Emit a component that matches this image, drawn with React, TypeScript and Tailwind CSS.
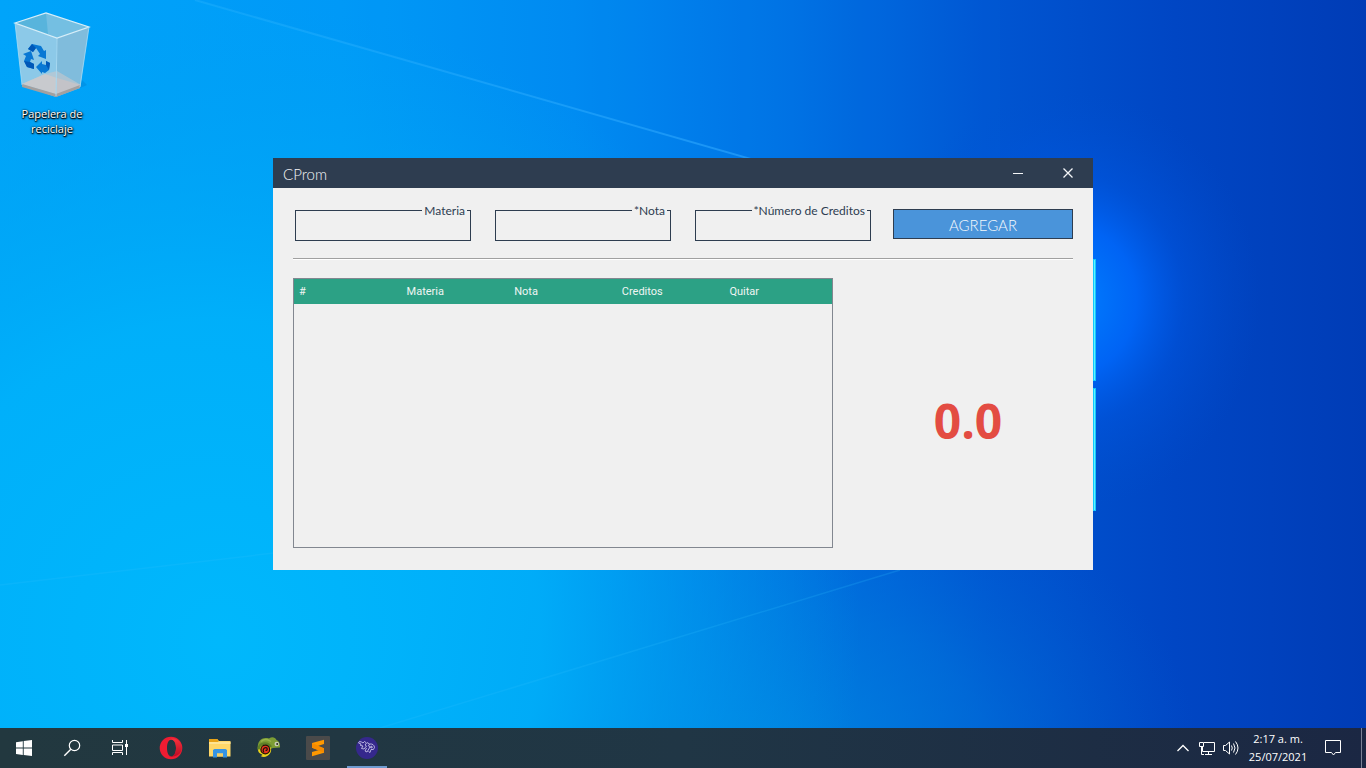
import type { ReactNode } from "react";

function Wallpaper() {
  return (
    <svg
      className="absolute inset-0 h-full w-full"
      viewBox="0 0 1366 768"
      preserveAspectRatio="none"
      aria-hidden="true"
    >
      <defs>
        <linearGradient id="sky" x1="0" y1="0" x2="1" y2="0">
          <stop offset="0" stopColor="#00a4fa" />
          <stop offset="0.25" stopColor="#009cf8" />
          <stop offset="0.42" stopColor="#008cf2" />
          <stop offset="0.58" stopColor="#0072e4" />
          <stop offset="0.72" stopColor="#0056d2" />
          <stop offset="0.86" stopColor="#0046c4" />
          <stop offset="1" stopColor="#003cb6" />
        </linearGradient>
        <radialGradient
          id="teal"
          gradientUnits="userSpaceOnUse"
          cx="0"
          cy="0"
          r="1"
          gradientTransform="translate(780 760) scale(420 300)"
        >
          <stop offset="0" stopColor="#0088e0" stopOpacity="0.8" />
          <stop offset="0.5" stopColor="#0078da" stopOpacity="0.5" />
          <stop offset="1" stopColor="#0060d0" stopOpacity="0" />
        </radialGradient>
        <radialGradient id="cyan" gradientUnits="userSpaceOnUse" cx="220" cy="640" r="640">
          <stop offset="0" stopColor="#00b8fc" />
          <stop offset="0.5" stopColor="#00b2fa" stopOpacity="0.85" />
          <stop offset="0.75" stopColor="#00a8f4" stopOpacity="0.45" />
          <stop offset="1" stopColor="#00a0ec" stopOpacity="0" />
        </radialGradient>
        <radialGradient
          id="glow"
          gradientUnits="userSpaceOnUse"
          cx="0"
          cy="0"
          r="1"
          gradientTransform="translate(1070 300) scale(190 210)"
        >
          <stop offset="0" stopColor="#0080ff" />
          <stop offset="0.35" stopColor="#0068fc" stopOpacity="0.85" />
          <stop offset="0.6" stopColor="#005ae8" stopOpacity="0.4" />
          <stop offset="1" stopColor="#0050d0" stopOpacity="0" />
        </radialGradient>
        <linearGradient id="beam" gradientUnits="userSpaceOnUse" x1="190" y1="0" x2="760" y2="160">
          <stop offset="0" stopColor="#30b8ff" stopOpacity="0.3" />
          <stop offset="1" stopColor="#30a8ff" stopOpacity="0.6" />
        </linearGradient>
      </defs>
      <rect width="1366" height="768" fill="url(#sky)" />
      <rect width="1366" height="768" fill="url(#teal)" />
      <rect width="1366" height="768" fill="url(#cyan)" />
      <rect width="1366" height="768" fill="url(#glow)" />
      <path d="M195 0 L1000 230 L1000 0 Z" fill="#0070e8" opacity="0.06" />
      <path d="M195 0 L800 173" stroke="url(#beam)" strokeWidth="2" />
      <path d="M0 585 L300 550 M380 728 L900 570" stroke="#30c0ff" strokeWidth="1.5" opacity="0.2" />
      <path d="M1080 259 H1096 V381 H1080 Z M1080 388 H1096 V511 H1080 Z" fill="#12c8ff" />
      <path d="M1094.500 260 V380 M1094.500 389 V510" stroke="#5cf4ff" />
    </svg>
  );
}

function RecycleBin() {
  return (
    <svg width="80" height="90" viewBox="12 10 80 90" aria-hidden="true">
      <path d="M80 88 L87 85 L82 80 Z" fill="#0086d8" opacity="0.5" />
      <path d="M15 23 L46 13 L89 27 L57 38 Z" fill="#58b4dc" />
      <path d="M46 13 L48 34 L57 38 L89 27 Z" fill="#74bfe2" />
      <path d="M15 23 L57 38 L56 97 L22 85 Z" fill="#8cc9e8" />
      <path d="M57 38 L89 27 L80 88 L56 97 Z" fill="#80bcdc" />
      <path d="M22 84 L45 74 L57 78 L56 94 Z" fill="#c9cdd2" />
      <path d="M57 78 L81 85 L56 95 Z" fill="#bcbcc2" />
      <path d="M45 74 L57 71 L81 85 L56 94 L22 84 Z" fill="#c8c8cc" opacity="0.6" />
      <path d="M22 84 L56 94 L80 85 V88 L56 97 L22 87 Z" fill="#a3a0a0" />
      <path d="M57 38 L56 96" stroke="#a8d8f0" />
      <path d="M15 23 L46 13 L89 27 L57 38 Z" fill="none" stroke="#d8eef8" strokeWidth="1.200" />
      <path d="M15 23 L22 85 M89 27 L80 87" stroke="#a8dcf4" strokeWidth="0.800" />
      <g fill="#0878d4">
        <path d="M28 49 L32 44 L41 46 L44 51 L46 50 L46 59 L38 56 L40 54 L36 48 L33 52 Z" />
        <path d="M23 54 L31 51 L34 60 L31 59 L30 62 L34 64 L34 69 L27 67 L24 61 L26 56 Z" />
        <path d="M36 67 L42 61 L42 64 L46 65 L46 61 L50 63 L49 70 L45 73 L42 72 L42 74 Z" />
      </g>
      <path d="M28 49 L32 44 L36 48 L33 52 Z M24 61 L30 62 L34 64 L34 69 L27 67 Z M46 65 L46 61 L50 63 L49 70 Z" fill="#0058b8" />
    </svg>
  );
}

function Field({ id, label }: { id: string; label: string }) {
  return (
    <fieldset className="mx-0.5 min-w-0 border border-[#2e3d50]">
      <legend className="mr-[3px] ml-auto px-0.5 text-[12px] leading-[13px]">
        <label htmlFor={id}>{label}</label>
      </legend>
      <input
        id={id}
        type="text"
        className="block h-[23px] w-full bg-transparent px-1 text-sm outline-none"
      />
    </fieldset>
  );
}

const columns = ["#", "Materia", "Nota", "Creditos", "Quitar"];

function CPromWindow() {
  return (
    <section className="relative w-[820px] max-w-full bg-[#f0f0f0] font-['Lato',sans-serif] text-[#2e3d50]">
      <header className="flex h-[30px] items-center bg-[#2e3d50] text-[#f4f6f8]">
        <h1 className="flex-1 pt-0.5 pl-2.5 text-[15px] leading-5 font-light">CProm</h1>
        <button type="button" aria-label="Minimizar" className="flex h-full w-[50px] items-center justify-center">
          <svg width="12" height="12" viewBox="0 0 12 12">
            <path d="M1 6.500 H11" stroke="currentColor" />
          </svg>
        </button>
        <button type="button" aria-label="Cerrar" className="flex h-full w-[50px] items-center justify-center">
          <svg width="12" height="12" viewBox="0 0 12 12">
            <path d="M1.500 1.500 L10.500 10.500 M10.500 1.500 L1.500 10.500" stroke="currentColor" strokeWidth="1.300" />
          </svg>
        </button>
      </header>
      <div className="px-5 pt-4 pb-[22px]">
        <form className="grid grid-cols-4 items-start gap-x-5" onSubmit={(e) => e.preventDefault()}>
          <Field id="materia" label="Materia" />
          <Field id="nota" label="*Nota" />
          <Field id="creditos" label="*Número de Creditos" />
          <button
            type="submit"
            className="mt-[5px] h-[30px] border border-[#2e3d50] bg-[#4a94da] pt-0.5 text-[15px] leading-5 font-light text-[#f4f8fc]"
          >
            AGREGAR
          </button>
        </form>
        <hr className="mt-[17px] border-t border-b border-t-[#a0a0a0] border-b-white" />
        <div className="mt-[18px] flex gap-[30px]">
          <div className="h-[270px] w-[540px] border border-[#828790]">
            <table className="w-full table-fixed border-collapse font-['Roboto',sans-serif] text-[11px]">
              <thead className="bg-[#2ca185] text-[#f0f5f3]">
                <tr>
                  {columns.map((name) => (
                    <th key={name} scope="col" className="h-[25px] pt-0.5 pl-[5px] text-left font-normal">
                      {name}
                    </th>
                  ))}
                </tr>
              </thead>
              <tbody />
            </table>
          </div>
          <output className="flex flex-1 items-center justify-center pt-4 font-['Open_Sans',sans-serif] text-[48px] leading-none font-bold text-[#e34c42]">
            0.0
          </output>
        </div>
      </div>
    </section>
  );
}

function TaskIcon({ label, active, children }: { label: string; active?: boolean; children: ReactNode }) {
  return (
    <button type="button" aria-label={label} className="flex h-10 w-12 flex-col items-center">
      <svg width="48" height="38" viewBox="0 0 48 38" fill="none" aria-hidden="true">
        {children}
      </svg>
      {active && <span className="h-0.5 w-10 bg-[#6f9bd0]" />}
    </button>
  );
}

function Taskbar() {
  return (
    <footer className="relative flex h-10 items-stretch justify-between bg-linear-to-r from-[#22383f] via-[#203645] to-[#1b2743] text-white">
      <nav className="flex">
        <TaskIcon label="Inicio">
          <path d="M16 14.200 L22.800 13.200 V19.500 H16 Z M23.700 13 L32 12 V19.500 H23.700 Z M16 20.400 H22.800 V26.900 L16 25.900 Z M23.700 20.400 H32 V28 L23.700 27 Z" fill="#fff" />
        </TaskIcon>
        <TaskIcon label="Buscar">
          <circle cx="26.500" cy="17.500" r="5.200" stroke="#fff" strokeWidth="1.200" />
          <path d="M22.800 21.200 L16.300 27.700" stroke="#fff" strokeWidth="1.400" />
        </TaskIcon>
        <TaskIcon label="Vista de tareas">
          <path d="M16.500 12 V14.500 H26.500 V12 M16.500 27 V24.500 H26.500 V27 M16.500 17 H26.500 V22.500 H16.500 Z M30.500 12 V27" stroke="#fff" />
          <path d="M29 16 H32 V19 H29 Z" fill="#fff" />
        </TaskIcon>
        <div className="ml-[3px] flex gap-px">
          <TaskIcon label="Opera">
            <defs>
              <linearGradient id="opera" x1="0" y1="0" x2="0" y2="1">
                <stop offset="0" stopColor="#f8323c" />
                <stop offset="1" stopColor="#b80c24" />
              </linearGradient>
            </defs>
            <path fillRule="evenodd" fill="#ee1c32" d="M24 8.700 A11.300 11.300 0 1 0 24 31.300 A11.300 11.300 0 1 0 24 8.700 Z M24.500 11.500 C27.500 11.500 29 15.500 29 20 C29 24.500 27.500 28.500 24.500 28.500 C21.500 28.500 20 24.500 20 20 C20 15.500 21.500 11.500 24.500 11.500 Z" />
            <path fill="url(#opera)" d="M21 12.500 C25 8.500 32 11 34.500 17 C36.500 25 29 31 21 27.500 C22.500 28.600 24.500 28.800 26 27.800 C30 25 30 15 26 12.200 C24.500 11.200 22.500 11.400 21 12.500 Z" />
          </TaskIcon>
          <TaskIcon label="Explorador de archivos">
            <path d="M13 11 H21 L23 13 H34.500 V28.500 H13 Z" fill="#ffd768" />
            <path d="M13 11 H21.500 L22.500 14 H13 Z" fill="#e8a317" />
            <path d="M13 14 H34.500 V16 H13 Z" fill="#ffe492" />
            <path d="M17 29.500 V22 L18.500 21 H29.500 L31 22 V29.500 H27 V25.500 H21 V29.500 Z" fill="#3694e4" />
            <path d="M21 25.500 H27 V28.500 H21 Z" fill="#f6cf66" />
          </TaskIcon>
          <TaskIcon label="Camaleón">
            <path d="M13 22 C11.500 13 17 8.500 24 10.500 C27 8.500 30 9 31.500 12 C34 13 35.500 16 35 19.500 L28 20 L23 22 Z" fill="#7c9d35" />
            <path d="M16 13.500 C19 10.800 23 11.500 26 13.500" stroke="#98b44c" strokeWidth="1.500" />
            <path d="M13 21 C13.500 15.500 22.500 14 25.500 19 C28.500 25 21 31.500 15.500 28 C18 27.500 18 26.500 16 26 C13.500 25 13 23 13 21 Z" fill="#ecd31a" />
            <path d="M13.500 21.500 C14 15 22 13.500 26 19" stroke="#5f8028" strokeWidth="2.500" />
            <circle cx="20.300" cy="21.500" r="4.400" fill="#e8331e" stroke="#201408" strokeWidth="1.300" />
            <path d="M19 24.500 C17 22 19 19.500 21 19.700 C23 20.200 22.500 23 20.500 22.300" stroke="#201408" strokeWidth="1.200" />
            <circle cx="31.800" cy="16" r="2.300" fill="#c8cdb8" />
            <circle cx="32.200" cy="16" r="1" fill="#283018" />
          </TaskIcon>
          <TaskIcon label="Sublime Text">
            <rect x="12" y="8" width="24" height="24" rx="1" fill="#4a4a4a" />
            <path d="M18 15 L30 11.700 V16 L23 18.200 L30 20.200 V24.700 L18 28.200 V24 L25 21.900 L18 19.700 Z" fill="#ff9800" />
            <path d="M18 15 V19.700 L30 24.700 V20.200 Z" fill="#f58a00" />
          </TaskIcon>
          <TaskIcon label="CProm" active>
            <circle cx="24" cy="20" r="11" fill="#35288c" />
            <g stroke="#d8d4f4" strokeWidth="0.800" strokeLinejoin="round">
              <path d="M15.500 15 Q16 12.500 18.500 14 L20 15 L21.500 13.500 L23.500 15 L22 17 L23.500 18 L21 21 L18.500 20.500 L20 18 L17.500 17.500 L18 16 Z" />
              <path d="M24 14.500 L26.500 16 L25.500 18 L27 19 L24 24 L22 23 L23.500 20 M26.500 16 Q31 15.500 31.500 19.500 Q31 22.500 28 21.500 L27 24.500 L25.500 23.500 M28 18 Q30 18.500 29 20 L27.500 19.500 Z" />
            </g>
          </TaskIcon>
        </div>
      </nav>
      <div className="flex items-stretch">
        <button type="button" aria-label="Mostrar iconos ocultos" className="w-6">
          <svg width="24" height="40" viewBox="0 0 24 40" fill="none" stroke="#fff" strokeWidth="1.300">
            <path d="M6.500 23 L12 17.500 L17.500 23" />
          </svg>
        </button>
        <button type="button" aria-label="Red" className="w-6">
          <svg width="24" height="40" viewBox="0 0 24 40" fill="none" stroke="#fff">
            <path d="M9 14.500 H19.500 V23.500 H7.500 V19 M13.500 24 V26.500 M10 26.500 H17 M4.500 14.500 H8.500 V18.500 H4.500 Z M6.500 19 V26.500 H9" />
          </svg>
        </button>
        <button type="button" aria-label="Volumen" className="w-6">
          <svg width="24" height="40" viewBox="0 0 24 40" fill="none" stroke="#fff">
            <path d="M4.500 17.500 H6.500 L10.500 14 V26 L6.500 22.500 H4.500 Z M12.500 17.500 Q14 20 12.500 22.500 M14.500 15.500 Q17.500 20 14.500 24.500 M16.500 13.500 Q21.500 20 16.500 26.500" />
          </svg>
        </button>
        <time
          dateTime="2021-07-25T02:17"
          className="flex w-[70px] flex-col items-center pt-0.5 font-['Open_Sans',sans-serif] text-[11px] leading-[18px] whitespace-nowrap"
        >
          <span>2:17 a. m.</span>
          <span>25/07/2021</span>
        </time>
        <button type="button" aria-label="Notificaciones" className="w-10">
          <svg width="40" height="40" viewBox="0 0 40 40" fill="none" stroke="#fff">
            <path d="M12.500 12.500 H27.500 V24.500 H22.500 L20.500 27 L18.500 24.500 H12.500 Z" />
          </svg>
        </button>
        <button type="button" aria-label="Mostrar escritorio" className="ml-2 w-[5px] border-l border-[#7a8296]" />
      </div>
    </footer>
  );
}

export default function App() {
  return (
    <div className="relative isolate flex min-h-screen flex-col overflow-hidden bg-[#0078e0]">
      <Wallpaper />
      <main className="relative flex flex-1 items-center justify-center">
        <a
          href="#papelera"
          className="absolute top-2.5 left-3 flex w-20 flex-col items-center gap-1.5 text-center font-['Open_Sans',sans-serif] text-[11px] leading-[15px] text-white [text-shadow:0_1px_1px_#000,1px_1px_2px_#000,0_0_2px_#000]"
        >
          <RecycleBin />
          <span>
            Papelera de
            <br />
            reciclaje
          </span>
        </a>
        <CPromWindow />
      </main>
      <Taskbar />
    </div>
  );
}
